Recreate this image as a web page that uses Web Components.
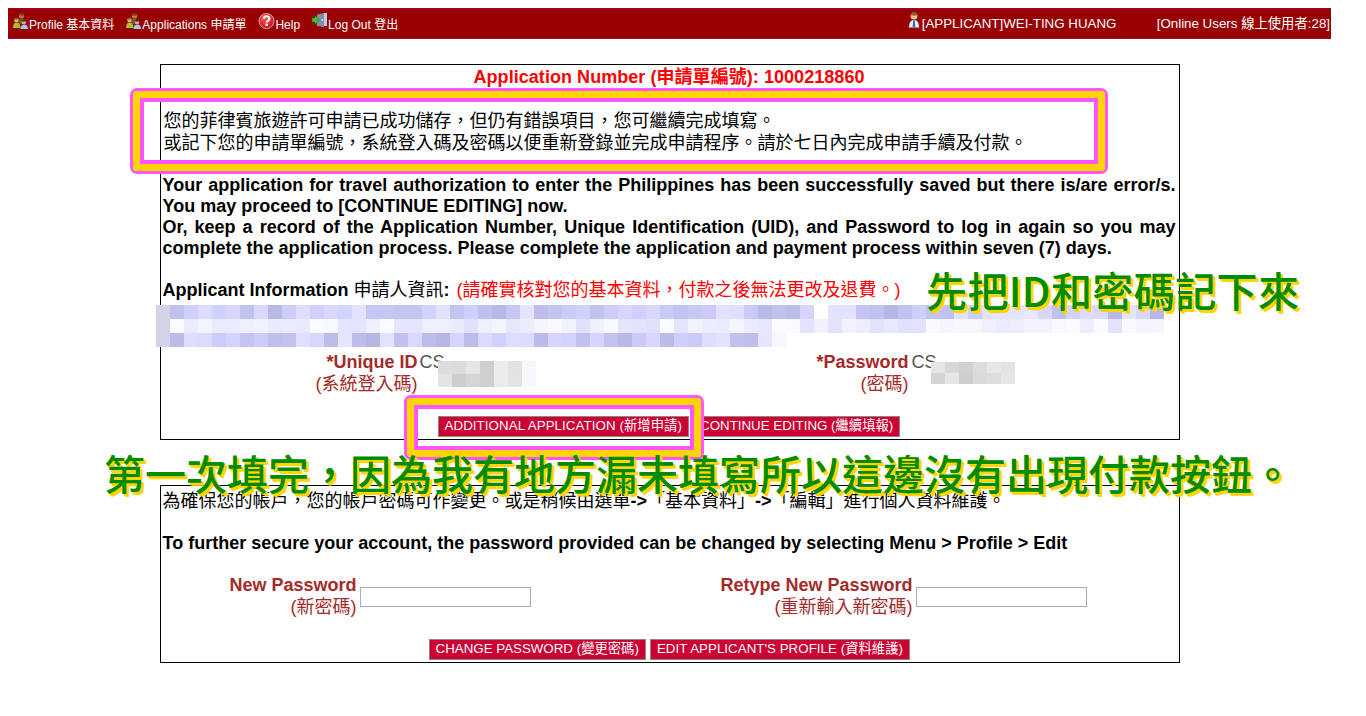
<!DOCTYPE html>
<html lang="zh-TW">
<head>
<meta charset="utf-8">
<title>Application</title>
<style>
body { margin: 8px; background: #fff; font-family: "Liberation Sans", "Noto Sans CJK TC", sans-serif; }
#page { position: relative; width: 1323px; height: 700px; }
top-bar { margin-bottom: 25px; }
info-panel + info-panel { margin-top: 45px; }
</style>
</head>
<body>
<template id="top-bar-tpl">
  <style>
    :host { display: flex; align-items: flex-start; height: 31px; background: #990000; border: solid #a00030; border-width: 1px 0; color: #fff; font-size: 12px; box-sizing: border-box; }
    .left { display: flex; gap: 12px; padding-left: 5px; flex: 1; }
    .right { display: flex; font-size: 13.33px; white-space: nowrap; }
    .user { width: 249px; }
    .online { padding: 6px 1px 0 0; line-height: 17px; }
  </style>
  <div class="left"><slot name="menu"></slot></div>
  <div class="right">
    <div class="user"><slot name="user"></slot></div>
    <div class="online"><slot name="online"></slot></div>
  </div>
</template>

<template id="menu-item-tpl">
  <style>
    :host { display: inline-flex; align-items: flex-start; white-space: nowrap; color: #fff; font-size: 12px; }
    .pic { display: block; margin-top: 4px; }
    .label { line-height: 16px; margin-top: 8px; }
    :host([user]) .pic { margin-top: 3px; }
    :host([user]) .label { line-height: 17px; margin-top: 6px; }
  </style>
  <span class="pic"></span><span class="label"><slot></slot></span>
</template>

<template id="info-panel-tpl">
  <style>
    :host { display: block; width: 1020px; margin: 0 auto; box-sizing: border-box; border: 1px solid #000; padding: 0 3px 0 2px; color: #000; font-size: 18px; line-height: 21px; background: #fff; }
  </style>
  <slot></slot>
</template>

<template id="field-pair-tpl">
  <style>
    :host { display: grid; grid-template-columns: 255px 232px 259px 1fr; font-size: 18px; line-height: 22px; }
  </style>
  <slot></slot>
</template>

<template id="field-label-tpl">
  <style>
    :host { display: block; text-align: right; color: #a52a2a; font-weight: bold; line-height: 22px; white-space: nowrap; }
    .zh { font-weight: normal; display: block; }
  </style>
  <slot></slot><span class="zh"><slot name="zh"></slot></span>
</template>

<template id="red-button-tpl">
  <style>
    :host { display: inline-block; box-sizing: border-box; height: 21px; padding: 0 6px; background: #cc0033; border: 1px solid #888; color: #fff; font-size: 13.33px; line-height: 17px; white-space: nowrap; }
  </style>
  <slot></slot>
</template>

<template id="pass-input-tpl">
  <style>
    :host { display: block; box-sizing: border-box; width: 171px; height: 20px; background: #fff; border: 1px solid #aaaacc; }
  </style>
</template>

<template id="mosaic-block-tpl">
  <style>
    :host { position: absolute; display: grid; pointer-events: none; }
    i { display: block; }
  </style>
</template>

<template id="mark-box-tpl">
  <style>
    :host { position: absolute; box-sizing: border-box; border: 3px solid #ff55ff; border-radius: 7px; pointer-events: none; }
    div { position: absolute; inset: 0; border: 7px solid #ffd400; box-shadow: inset 0 0 0 4px #ff55ff; border-radius: 3px; }
  </style>
  <div></div>
</template>

<template id="note-text-tpl">
  <style>
    :host { position: absolute; color: #008c00; font-size: 41px; line-height: 44px; white-space: nowrap; text-shadow: 2px 2px 0 #ffd400, 3px 3px 0 #ffd400; font-family: "Noto Sans CJK TC", "Liberation Sans", sans-serif; font-weight: 500; }
  </style>
  <slot></slot>
</template>

<div id="page">
  <top-bar>
    <menu-item slot="menu" icon="people">Profile 基本資料</menu-item>
    <menu-item slot="menu" icon="people">Applications 申請單</menu-item>
    <menu-item slot="menu" icon="help">Help</menu-item>
    <menu-item slot="menu" icon="door">Log Out 登出</menu-item>
    <menu-item slot="user" icon="user" user style="font-size:13.33px">[APPLICANT]WEI-TING HUANG</menu-item>
    <span slot="online">[Online Users 線上使用者:28]</span>
  </top-bar>

  <info-panel id="first">
    <div style="text-align:center;color:#ff0000;font-weight:bold;height:24px;line-height:24px;letter-spacing:.05px">Application Number (申請單編號): 1000218860</div>
    <div style="height:21px"></div>
    <div style="line-height:22px;padding-left:1px">您的菲律賓旅遊許可申請已成功儲存，但仍有錯誤項目，您可繼續完成填寫。<br>或記下您的申請單編號，系統登入碼及密碼以便重新登錄並完成申請程序。請於七日內完成申請手續及付款。</div>
    <div style="height:21px"></div>
    <div style="font-weight:bold;text-align:justify">Your application for travel authorization to enter the Philippines has been successfully saved but there is/are error/s. You may proceed to [CONTINUE EDITING] now.<br>Or, keep a record of the Application Number, Unique Identification (UID), and Password to log in again so you may complete the application process. Please complete the application and payment process within seven (7) days.</div>
    <div style="height:21px"></div>
    <div><b>Applicant Information</b> 申請人資訊<b>:</b> <span style="color:#ff0000;margin-left:2px">(請確實核對您的基本資料，付款之後無法更改及退費。)</span></div>
    <div style="height:50px"></div>
    <field-pair>
      <field-label>*Unique ID<span slot="zh">(系統登入碼)</span></field-label>
      <div style="color:#555;padding-left:2px">CS</div>
      <field-label>*Password<span slot="zh">(密碼)</span></field-label>
      <div style="color:#555;padding-left:3px">CS</div>
    </field-pair>
    <div style="display:flex;gap:4px;margin-top:21px;padding-left:275px;height:23px">
      <red-button style="letter-spacing:.07px">ADDITIONAL APPLICATION (新增申請)</red-button>
      <red-button>CONTINUE EDITING (繼續填報)</red-button>
    </div>
  </info-panel>

  <info-panel id="second">
    <div style="padding-top:4px;line-height:22px">為確保您的帳戶，您的帳戶密碼可作變更。或是稍候由選單<b>-&gt;</b>「基本資料」<b>-&gt;</b>「編輯」進行個人資料維護。</div>
    <div style="height:21px"></div>
    <div style="font-weight:bold">To further secure your account, the password provided can be changed by selecting Menu &gt; Profile &gt; Edit</div>
    <div style="height:20px"></div>
    <field-pair style="grid-template-columns:194px 364px 192px 1fr">
      <field-label>New Password<span slot="zh">(新密碼)</span></field-label>
      <div style="padding:13px 0 0 3px"><pass-input></pass-input></div>
      <field-label>Retype New Password<span slot="zh">(重新輸入新密碼)</span></field-label>
      <div style="padding:13px 0 0 3px"><pass-input></pass-input></div>
    </field-pair>
    <div style="display:flex;gap:4px;margin-top:21px;padding-left:266px;height:23px">
      <red-button>CHANGE PASSWORD (變更密碼)</red-button>
      <red-button style="letter-spacing:.03px">EDIT APPLICANT'S PROFILE (資料維護)</red-button>
    </div>
  </info-panel>

  <mosaic-block seed="7" cols="72" rows="3" style="left:148px;top:297px"></mosaic-block>
  <mosaic-block seed="3" cols="7" rows="2" grey cell="13" style="left:430px;top:353px"></mosaic-block>
  <mosaic-block seed="5" cols="6" rows="2" grey cell="11" style="left:923px;top:354px"></mosaic-block>

  <mark-box style="left:122px;top:80px;width:978px;height:86px"></mark-box>
  <mark-box style="left:396px;top:387px;width:300px;height:65px"></mark-box>

  <note-text style="left:918px;top:259px;letter-spacing:.4px">先把ID和密碼記下來</note-text>
  <note-text style="left:96px;top:442px">第一次填完，因為我有地方漏未填寫所以這邊沒有出現付款按鈕。</note-text>
</div>

<script>
function fromTemplate(id) {
  return document.getElementById(id).content.cloneNode(true);
}

// little toolbar pictures, drawn by hand
const ICONS = {
  people: `<svg width="16" height="16" viewBox="0 0 16 16" style="display:block">
    <circle cx="8.500" cy="3" r="2.600" fill="#b07a48"/><path d="M6 2.500c0-2.500 5-2.500 5 0z" fill="#6a4020"/>
    <path d="M5 11c0-4 1.500-5.500 3.500-5.500S12 7 12 11z" fill="#7d5228"/>
    <circle cx="3.500" cy="7" r="2.300" fill="#e6b878"/><path d="M1.500 6.500c0-2 4-2 4 0z" fill="#7a4a20"/>
    <path d="M0 15c0-4 1.500-5.500 3.500-5.500S7.500 11 7.500 15z" fill="#a8c030"/>
    <circle cx="11" cy="9" r="2.300" fill="#e0b080"/><path d="M8.800 8.500c0-2.200 4.400-2.200 4.400 0z" fill="#33261a"/>
    <path d="M7.500 16c0-3 1.500-4.500 3.800-4.500s3.800 1.500 3.800 4.500z" fill="#9ccaee"/></svg>`,
  help: `<svg width="17" height="16" viewBox="0 0 16 16" style="display:block">
    <defs><radialGradient id="hg" cx=".4" cy=".3" r=".8"><stop offset="0" stop-color="#ff5a5a"/><stop offset="1" stop-color="#c80010"/></radialGradient></defs>
    <circle cx="8" cy="8" r="7.500" fill="url(#hg)" stroke="#c8b0b0"/>
    <path d="M5.300 5.800c0-3.400 5.600-3.400 5.600 0 0 2-2.700 2-2.700 3.800" fill="none" stroke="#fff" stroke-width="2.200"/>
    <rect x="7" y="10.600" width="2.400" height="2.400" fill="#fff"/></svg>`,
  door: `<svg width="16" height="14" viewBox="0 0 16 14" style="display:block">
    <path d="M5 1.500L12 0v14l-7-1z" fill="#7f90aa"/><path d="M12 0h3v13h-3z" fill="#c4ccd8"/>
    <rect x="9.500" y="6" width="1.400" height="2" fill="#dde"/>
    <path d="M0 5h3V2.500L7.500 7 3 11.500V9H0z" fill="#44c030" stroke="#1a7a10" stroke-width=".6"/></svg>`,
  user: `<svg width="14" height="16" viewBox="0 0 14 16" style="display:block">
    <circle cx="6" cy="4" r="3.500" fill="#ecc08c"/><path d="M2.500 3.500C2.500-.5 9.500-.5 9.500 3.500z" fill="#8a5a2e"/>
    <path d="M1 15.500c0-5 2-7.500 5-7.500s5 2.500 5 7.500z" fill="#eef2fa" stroke="#8fa4d0" stroke-width=".5"/>
    <path d="M5.200 8h1.600l.7 7.500H4.500z" fill="#4a6ab0"/></svg>`
};

class TopBar extends HTMLElement {
  constructor() {
    super();
    this.attachShadow({ mode: "open" }).appendChild(fromTemplate("top-bar-tpl"));
  }
}

class MenuItem extends HTMLElement {
  constructor() {
    super();
    this.attachShadow({ mode: "open" }).appendChild(fromTemplate("menu-item-tpl"));
  }
  connectedCallback() {
    this.shadowRoot.querySelector(".pic").innerHTML = ICONS[this.getAttribute("icon")];
  }
}

// plain wrappers: markup and styles only
function plain(name, tpl) {
  customElements.define(name, class extends HTMLElement {
    constructor() {
      super();
      this.attachShadow({ mode: "open" }).appendChild(fromTemplate(tpl));
    }
  });
}

class MosaicBlock extends HTMLElement {
  constructor() {
    super();
    this.attachShadow({ mode: "open" }).appendChild(fromTemplate("mosaic-block-tpl"));
  }
  connectedCallback() {
    const cols = +this.getAttribute("cols");
    const rows = +this.getAttribute("rows");
    const grey = this.hasAttribute("grey");
    let s = +this.getAttribute("seed");
    const next = () => (s = (s * 16807) % 2147483647) / 2147483647;
    this.style.gridTemplateColumns = `repeat(${cols},14px)`;
    this.style.gridAutoRows = `${this.getAttribute("cell") || 14}px`;
    for (let r = 0; r < rows; r++) {
      for (let c = 0; c < cols; c++) {
        next();
        const cell = document.createElement("i");
        const v = next();
        let color;
        if (grey) {
          const g = Math.round(205 + v * 38);
          color = c === cols - 1 && cols === 7 ? "#f6f8fb" : `rgb(${g},${g},${g + 1})`;
        } else if (c === 0) {
          color = "#d2d2e8";
        } else {
          // middle row is the pale one, last row stops early like the text it hides
          const b = Math.round(r === 1 ? 224 + v * 27 : 182 + v * 50);
          color = `rgb(${b},${b},${Math.min(255, b + 46)})`;
          if (r === 0 && c === 47) color = "transparent";
          if (r === 2 && c === 44) color = "#f6f6fe";
          if (r === 2 && c > 44) color = "transparent";
        }
        cell.style.background = color;
        this.shadowRoot.appendChild(cell);
      }
    }
  }
}

customElements.define("top-bar", TopBar);
customElements.define("menu-item", MenuItem);
customElements.define("mosaic-block", MosaicBlock);
plain("info-panel", "info-panel-tpl");
plain("field-pair", "field-pair-tpl");
plain("field-label", "field-label-tpl");
plain("red-button", "red-button-tpl");
plain("pass-input", "pass-input-tpl");
plain("mark-box", "mark-box-tpl");
plain("note-text", "note-text-tpl");
</script>
</body>
</html>
